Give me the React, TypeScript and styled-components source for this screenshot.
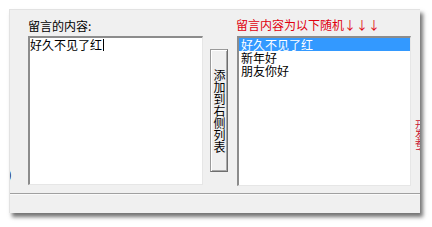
import React from "react";
import styled, { createGlobalStyle } from "styled-components";

const Global = createGlobalStyle`
  html, body { margin: 0; padding: 0; background: #ffffff; }
  body { font-family: "Noto Sans CJK SC", "Noto Sans", sans-serif; }
`;

const Page = styled.div`
  width: 432px;
  height: 227px;
  padding: 9px 0 0 9px;
  box-sizing: border-box;
`;

const Window = styled.div`
  width: 411px;
  height: 204px;
  background: #f0f0f0;
  box-sizing: border-box;
  border-top: 1px solid #e2e2e2;
  border-left: 1px solid #e2e2e2;
  box-shadow: 3px 4px 4px rgba(0, 0, 0, 0.55);
  display: flex;
  flex-direction: column;
  overflow: hidden;
`;

const Content = styled.div`
  display: grid;
  grid-template-columns: 18px 175px 7px 18px 9px 174px 9px;
  grid-template-rows: 18px 150px;
  padding-top: 8px;
  height: 183px;
  box-sizing: border-box;
  font-size: 12px;
  line-height: 13px;
`;

const Label = styled.div<{ $red?: boolean; $col: number }>`
  grid-column: ${(p) => p.$col};
  grid-row: 1;
  color: ${(p) => (p.$red ? "#e0000f" : "#000")};
  font-size: 12px;
  line-height: 16px;
  white-space: nowrap;
  margin-left: ${(p) => (p.$red ? "-1px" : "0")};
  margin-top: ${(p) => (p.$red ? "-1px" : "0")};
`;

const Sunken = styled.div<{ $col: number; $h: number }>`
  grid-column: ${(p) => p.$col};
  grid-row: 2;
  height: ${(p) => p.$h}px;
  background: #fff;
  box-sizing: border-box;
  border-style: solid;
  border-width: 2px 1px 1px 2px;
  border-color: #8c8c8c #e6e6e6 #e6e6e6 #8c8c8c;
  color: #000;
  overflow: hidden;
`;

const MemoText = styled.div`
  padding: 0 0 0 0;
  white-space: nowrap;
  display: flex;
  align-items: center;
  height: 13px;
`;

const Caret = styled.span`
  display: inline-block;
  width: 1px;
  height: 12px;
  background: #000;
  margin-left: 1px;
`;

const Item = styled.div<{ $selected?: boolean }>`
  height: 13px;
  line-height: 13px;
  padding-left: 2px;
  white-space: nowrap;
  background: ${(p) => (p.$selected ? "#3399ff" : "transparent")};
  color: ${(p) => (p.$selected ? "#fff" : "#000")};
`;

const AddButton = styled.div`
  grid-column: 4;
  grid-row: 2;
  margin-top: 13px;
  height: 123px;
  box-sizing: border-box;
  background: #f0f0f0;
  border: 1px solid #6e6e6e;
  border-top-color: #9a9a9a;
  border-left-color: #9a9a9a;
  box-shadow: inset 1px 1px 0 #ffffff, inset -1px -1px 0 #a8a8a8;
  display: flex;
  align-items: center;
  justify-content: center;
`;

const VerticalText = styled.span`
  writing-mode: vertical-rl;
  font-size: 12px;
  line-height: 12px;
  letter-spacing: 0;
  color: #000;
`;

const LeftGutter = styled.div`
  grid-column: 1;
  grid-row: 2;
  display: flex;
  align-items: flex-end;
  padding-bottom: 6px;
  overflow: hidden;
`;

const Paren = styled.span`
  font-size: 11px;
  line-height: 11px;
  margin-left: -2px;
  color: #000;
`;

const RightGutter = styled.div`
  grid-column: 7;
  grid-row: 2;
  overflow: hidden;
  padding-top: 84px;
  padding-left: 4px;
`;

const RedClip = styled.span`
  writing-mode: vertical-rl;
  color: #c8102e;
  font-size: 9px;
  line-height: 9px;
  display: block;
`;

const StatusBar = styled.div`
  flex: 1;
  border-top: 1px solid #a0a0a0;
  box-shadow: inset 0 1px 0 #fafafa;
  background: #f0f0f0;
`;

export default function App() {
  return (
    <>
      <Global />
      <Page>
        <Window>
          <Content>
            <Label $col={2}>留言的内容:</Label>
            <Label $col={6} $red>
              留言内容为以下随机↓↓↓
            </Label>
            <LeftGutter>
              <Paren>)</Paren>
            </LeftGutter>
            <Sunken $col={2} $h={149}>
              <MemoText>
                好久不见了红
                <Caret />
              </MemoText>
            </Sunken>
            <AddButton>
              <VerticalText>添加到右侧列表</VerticalText>
            </AddButton>
            <Sunken $col={6} $h={150}>
              <Item $selected>好久不见了红</Item>
              <Item>新年好</Item>
              <Item>朋友你好</Item>
            </Sunken>
            <RightGutter>
              <RedClip>开发者Y</RedClip>
            </RightGutter>
          </Content>
          <StatusBar />
        </Window>
      </Page>
    </>
  );
}
